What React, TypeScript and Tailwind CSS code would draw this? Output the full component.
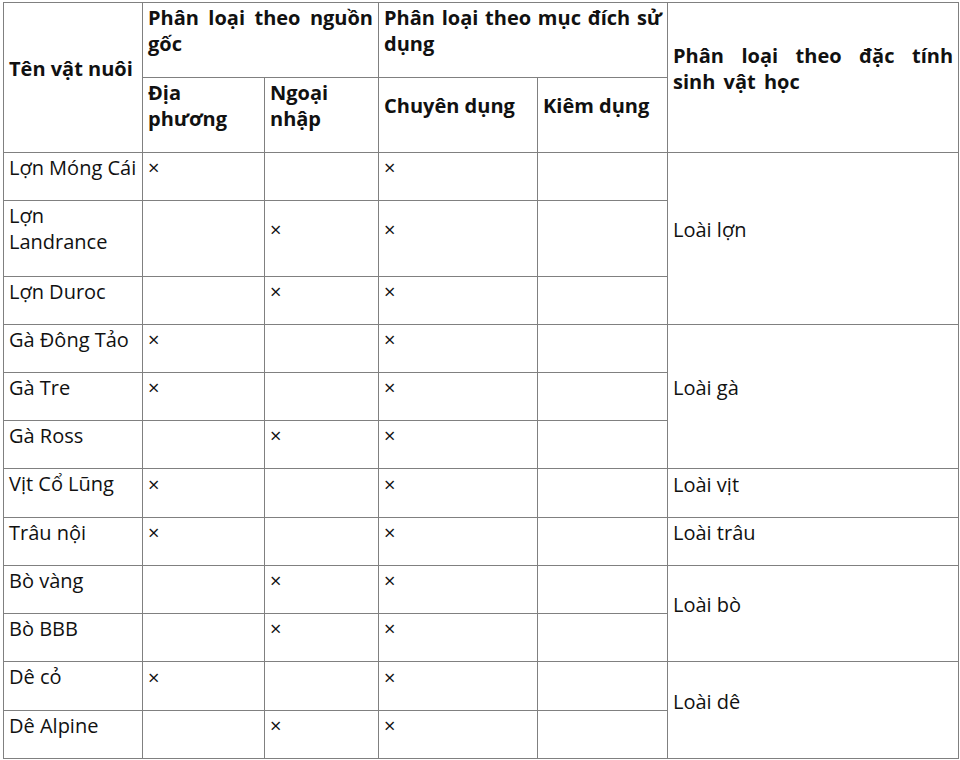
import React from 'react'

type Row = {
  name: string
  local?: boolean
  imported?: boolean
  special?: boolean
  extra?: number
  group?: { label: string; span: number }
}

const rows: Row[] = [
  { name: 'Lợn Móng Cái', local: true, special: true, group: { label: 'Loài lợn', span: 3 } },
  { name: 'Lợn Landrance', imported: true, special: true, extra: 2 },
  { name: 'Lợn Duroc', imported: true, special: true },
  { name: 'Gà Đông Tảo', local: true, special: true, group: { label: 'Loài gà', span: 3 } },
  { name: 'Gà Tre', local: true, special: true },
  { name: 'Gà Ross', imported: true, special: true },
  { name: 'Vịt Cổ Lũng', local: true, special: true, extra: 1, group: { label: 'Loài vịt', span: 1 } },
  { name: 'Trâu nội', local: true, special: true, group: { label: 'Loài trâu', span: 1 } },
  { name: 'Bò vàng', imported: true, special: true, group: { label: 'Loài bò', span: 2 } },
  { name: 'Bò BBB', imported: true, special: true },
  { name: 'Dê cỏ', local: true, special: true, extra: 1, group: { label: 'Loài dê', span: 2 } },
  { name: 'Dê Alpine', imported: true, special: true },
]

const base = 'border border-[#808080] pl-[5px] pr-[5px] pt-[2px] align-middle'
const cell = base + ' pb-[19px]'
const head = base + ' pb-[20px] font-bold text-justify'

// extra bottom padding on the first cell for the rows that are a bit taller
const nameCell = (extra?: number) =>
  extra === 2 ? base + ' pb-[21px]' : extra === 1 ? base + ' pb-[20px]' : cell

export default function App() {
  return (
    <div
      className="bg-white pl-[3px] pt-[2px] text-[20px] leading-[26px] text-[#111]"
      style={{ fontFamily: '"Open Sans", "Noto Sans", sans-serif' }}
    >
      <table className="w-[955px] table-fixed border-collapse">
        <colgroup>
          <col className="w-[139px]" />
          <col className="w-[122px]" />
          <col className="w-[114px]" />
          <col className="w-[159px]" />
          <col className="w-[130px]" />
          <col className="w-[291px]" />
        </colgroup>
        <thead>
          <tr>
            <th rowSpan={2} className={head + ' text-left'}>
              Tên vật nuôi
            </th>
            <th colSpan={2} className={head + ' align-top'} style={{ textAlignLast: 'left' }}>
              Phân loại theo nguồn gốc
            </th>
            <th colSpan={2} className={head + ' align-top'} style={{ textAlignLast: 'left' }}>
              Phân loại theo mục đích sử dụng
            </th>
            <th
              rowSpan={2}
              className={head + ' [word-spacing:3px]'}
              style={{ textAlignLast: 'left' }}
            >
              Phân loại theo đặc tính sinh vật học
            </th>
          </tr>
          <tr>
            <th className={head + ' text-left'}>Địa phương</th>
            <th className={head + ' text-left'}>Ngoại nhập</th>
            <th className={head + ' text-left'}>Chuyên dụng</th>
            <th className={head + ' text-left'}>Kiêm dụng</th>
          </tr>
        </thead>
        <tbody>
          {rows.map(r => (
            <tr key={r.name}>
              <td className={nameCell(r.extra)}>{r.name}</td>
              <td className={cell}>{r.local ? '×' : ''}</td>
              <td className={cell}>{r.imported ? '×' : ''}</td>
              <td className={cell}>{r.special ? '×' : ''}</td>
              <td className={cell}></td>
              {r.group && (
                <td rowSpan={r.group.span} className={cell}>
                  {r.group.label}
                </td>
              )}
            </tr>
          ))}
        </tbody>
      </table>
    </div>
  )
}
